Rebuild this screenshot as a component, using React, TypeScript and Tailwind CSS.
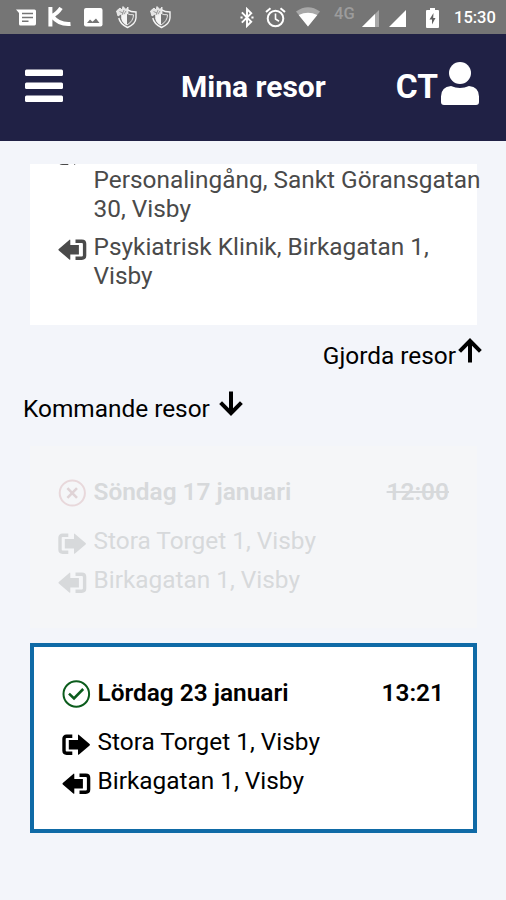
import React from 'react';

interface Stop {
  kind: 'from' | 'to';
  text: string;
}

interface Trip {
  date: string;
  time: string;
  cancelled?: boolean;
  stops: Stop[];
}

const cancelledTrip: Trip = {
  date: 'Söndag 17 januari',
  time: '12:00',
  cancelled: true,
  stops: [
    { kind: 'from', text: 'Stora Torget 1, Visby' },
    { kind: 'to', text: 'Birkagatan 1, Visby' },
  ],
};

const nextTrip: Trip = {
  date: 'Lördag 23 januari',
  time: '13:21',
  stops: [
    { kind: 'from', text: 'Stora Torget 1, Visby' },
    { kind: 'to', text: 'Birkagatan 1, Visby' },
  ],
};

const FromIcon = () => (
  <svg className="w-[29px] h-[22px] shrink-0" viewBox="0 0 29 22">
    <path d="M10.3 2.2H4.6Q2 2.2 2 4.8V16.6Q2 19.2 4.6 19.2H10.3" fill="none" stroke="currentColor" strokeWidth="3.4" />
    <path d="M6.8 6H16V1.4Q16 0 17 .9L27.6 10Q28.4 10.7 27.6 11.4L17 20.5Q16 21.4 16 20V15.4H6.8Z" fill="currentColor" />
  </svg>
);

const ToIcon = () => (
  <svg className="w-[29px] h-[22px] shrink-0" viewBox="0 0 29 22">
    <path d="M17.5 2.2H23.8Q26.6 2.2 26.6 4.8V16.6Q26.6 19.2 23.8 19.2H17.5" fill="none" stroke="currentColor" strokeWidth="3.4" />
    <path d="M20.9 6H12.3V1.4Q12.3 0 11.3 .9L.8 10Q0 10.7 .8 11.4L11.3 20.5Q12.3 21.4 12.3 20V15.4H20.9Z" fill="currentColor" />
  </svg>
);

const CancelledIcon = () => (
  <svg className="mt-px w-[29px] h-[28px] shrink-0" viewBox="0 0 29 28" fill="none">
    <circle cx="14.3" cy="14" r="12.6" stroke="#e8d8db" strokeWidth="2" />
    <path d="M9.4 9.2L19 18.8M19 9.2L9.4 18.8" stroke="#dfd3d6" strokeWidth="2.6" />
  </svg>
);

const ConfirmedIcon = () => (
  <svg className="mt-px w-[29px] h-[28px] shrink-0 text-[#0b5c1c]" viewBox="0 0 29 28" fill="none" stroke="currentColor">
    <circle cx="14.3" cy="14" r="12.8" strokeWidth="2" />
    <path d="M7 13.6L12 18.4L21.2 9" strokeWidth="2.6" />
  </svg>
);

const ArrowIcon = ({ down = false }: { down?: boolean }) => (
  <svg
    className={down ? 'w-6 h-[25px] rotate-180' : 'w-6 h-[25px]'}
    viewBox="0 0 24 25"
    fill="none"
    stroke="black"
    strokeWidth="4"
  >
    <path d="M12 24.6V3M1.6 13.4L12 2.9L22.4 13.4" />
  </svg>
);

const StopRow = ({ stop }: { stop: Stop }) => (
  <div className="flex gap-[6.5px]">
    <div className="pt-1.5">{stop.kind === 'from' ? <FromIcon /> : <ToIcon />}</div>
    <span className="whitespace-nowrap">{stop.text}</span>
  </div>
);

const TripCard = ({ trip }: { trip: Trip }) => (
  <div
    className={
      trip.cancelled
        ? 'w-[447px] h-[182px] mx-[30px] pl-7 pr-7 pt-8 bg-[#f5f6f8] text-[#d7d9db]'
        : 'w-[447px] h-[190px] mx-[30px] pl-7 pr-[29px] pt-8 bg-white border-4 border-[#0f6aa6] text-black'
    }
  >
    <div className="flex items-start h-[28.5px] gap-[6.5px] font-semibold">
      {trip.cancelled ? <CancelledIcon /> : <ConfirmedIcon />}
      <span>{trip.date}</span>
      <span className={trip.cancelled ? 'ml-auto line-through decoration-2' : 'ml-auto'}>{trip.time}</span>
    </div>
    <div className="mt-[20.5px] flex flex-col gap-[10px]">
      {trip.stops.map((stop) => (
        <StopRow key={stop.kind} stop={stop} />
      ))}
    </div>
  </div>
);

const ShieldIcon = () => (
  <svg className="w-[23px] h-[24px]" viewBox="0 0 23 24" fill="none" stroke="#f5f5f5" strokeWidth="1.4">
    <path d="M12 4.6Q16 7 21 7V13Q20.6 19 12.5 22.5Q5 19 3.8 13" />
    <path d="M12 7.5V20.5Q7 18 6.2 13.5V9Z" fill="#f5f5f5" stroke="none" />
    <path d="M1.5 6L5 3L7 5L8 1.5L11 4.5L13 2L13 8L9 11L6 9L3 11Z" fill="#e4e4e4" strokeWidth=".8" />
    <path d="M4.5 6.5L8 8M9 5L7 10M11 6L9 9" stroke="#888" strokeWidth=".8" />
    <path d="M12 8.5Q15 10 18.5 9.8Q18.5 16 12 20" strokeWidth=".9" />
  </svg>
);

const StatusBar = () => (
  <div className="h-[34px] shrink-0 bg-[#757575] flex items-center text-white">
    <svg className="mt-px ml-4 w-5 h-[18px]" viewBox="0 0 20 18">
      <path d="M0 .5H18.5Q20 .5 20 2V14.5Q20 16.5 18.5 16.5H4.5Q3 16.5 3 15V4Z" fill="white" />
      <path d="M6 4.6H17M6 8.4H17M6 12.2H12.5" stroke="#757575" strokeWidth="1.5" />
    </svg>
    <svg className="ml-3 w-[23px] h-[20px]" viewBox="0 0 23 20" fill="none" stroke="white" strokeWidth="4">
      <path d="M2.4 0V19.5M13 1Q9 7 4 9Q11 18 22.5 17" />
    </svg>
    <svg className="mt-px ml-[13px] w-[19px] h-[19px]" viewBox="0 0 19 19">
      <rect width="18.5" height="18.5" rx="2" fill="white" />
      <path d="M3 15L6 11.5L8.5 13.8L12 10.5L15.5 15Z" fill="#757575" />
    </svg>
    <div className="ml-[12px] flex gap-[11px]">
      <ShieldIcon />
      <ShieldIcon />
    </div>
    <svg className="mt-px ml-[68px] w-[14px] h-[21px]" viewBox="0 0 15 22" fill="none" stroke="white" strokeWidth="2.1">
      <path d="M2 5.5L12 15.5L7.5 20V2L12 6.5L2 16.5" />
      <path d="M.5 11H2.8M12.2 11H14.5" />
    </svg>
    <svg className="ml-[11px] w-[21px] h-[21px]" viewBox="0 0 21 21" fill="none" stroke="white" strokeWidth="2">
      <circle cx="10.5" cy="11.5" r="7.8" />
      <path d="M10.5 6.5V12L14 14.2" strokeWidth="1.6" />
      <path d="M1 5L5.5 1.2M20 5L15.5 1.2" />
    </svg>
    <svg className="ml-[10px] w-6 h-[20px]" viewBox="0 0 24 20">
      <path d="M0 4.5Q12 -4 24 4.5L12 19.5Z" fill="#a8a8a8" />
      <path d="M2.7 8Q12 3.5 21.3 8L12 19.5Z" fill="white" />
    </svg>
    <span className="ml-[14px] mb-[7px] w-[22px] text-[16.5px] leading-4 font-medium text-[#9c9c9c]">4G</span>
    <svg className="mt-0.5 ml-[6px] w-[17px] h-[17px]" viewBox="0 0 17 17">
      <path d="M0 17L17 0V17Z" fill="#a8a8a8" />
      <path d="M0 17L13 4V17Z" fill="white" />
    </svg>
    <svg className="mt-0.5 ml-[10px] w-[17px] h-[17px]" viewBox="0 0 17 17">
      <path d="M0 17L17 0V17Z" fill="white" />
    </svg>
    <svg className="mt-0.5 ml-5 w-[13px] h-[20px]" viewBox="0 0 13 20">
      <path d="M4 0H9V2H12Q13 2 13 3V19Q13 20 12 20H1Q0 20 0 19V3Q0 2 1 2H4Z" fill="white" />
      <path d="M7.5 5L3.5 11.5H6V16.5L9.5 10H7.2Z" fill="#606060" />
    </svg>
    <span className="mt-0.5 ml-[15px] text-[16.5px] font-medium">15:30</span>
  </div>
);

const Header = () => (
  <header className="h-[107px] shrink-0 bg-[#202145] text-white flex items-center pl-[25px] pr-[27px] pb-1">
    <svg className="w-[38px] h-[34px]" viewBox="0 0 38 34" fill="white">
      <rect y=".5" width="38" height="6.5" rx="1.5" />
      <rect y="13.5" width="38" height="6.5" rx="1.5" />
      <rect y="26.5" width="38" height="6.5" rx="1.5" />
    </svg>
    <h1 className="mt-px ml-[118px] text-[30px] font-bold whitespace-nowrap">Mina resor</h1>
    <div className="ml-auto flex items-center gap-[3px]">
      <span className="mt-[3px] text-[33.5px] font-bold">CT</span>
      <svg className="mb-1 w-[38px] h-[44px]" viewBox="0 0 38 44" fill="white">
        <circle cx="19" cy="11" r="11" />
        <path d="M10 24Q19 28 28 24Q38 25 38 34.5V40Q38 43 35 43H3Q0 43 0 40V34.5Q0 25 10 24Z" />
      </svg>
    </div>
  </header>
);

export default function App() {
  return (
    <div className="w-[506px] h-[900px] overflow-hidden flex flex-col bg-[#f3f5fa] font-[Roboto,sans-serif]">
      <StatusBar />
      <Header />
      <main className="text-[24.4px] leading-[28.5px]">
        {/* Past trips, scrolled to the end of the last card */}
        <div className="mt-[23px] h-[161px] overflow-hidden flex flex-col justify-end">
          <div className="w-[447px] mx-[30px] shrink-0 bg-white text-[#4a4a4a] pl-7 pb-[35px] flex flex-col gap-[10px]">
            <div className="flex gap-[6.5px]">
              <div className="pt-1.5">
                <FromIcon />
              </div>
              <p className="pt-[28.5px] whitespace-nowrap">
                Personalingång, Sankt Göransgatan
                <br />
                30, Visby
              </p>
            </div>
            <div className="flex gap-[6.5px]">
              <div className="pt-1.5">
                <ToIcon />
              </div>
              <p className="whitespace-nowrap">
                Psykiatrisk Klinik, Birkagatan 1,
                <br />
                Visby
              </p>
            </div>
          </div>
        </div>

        <div className="mt-[13px] mr-6 h-[34px] flex justify-end gap-0.5">
          <span className="pt-1">Gjorda resor</span>
          <ArrowIcon />
        </div>
        <div className="mt-[19px] ml-[23px] h-[35px] flex gap-[9px]">
          <span className="pt-1">Kommande resor</span>
          <ArrowIcon down />
        </div>

        <div className="mt-5 flex flex-col gap-[15px]">
          <TripCard trip={cancelledTrip} />
          <TripCard trip={nextTrip} />
        </div>
      </main>
    </div>
  );
}
